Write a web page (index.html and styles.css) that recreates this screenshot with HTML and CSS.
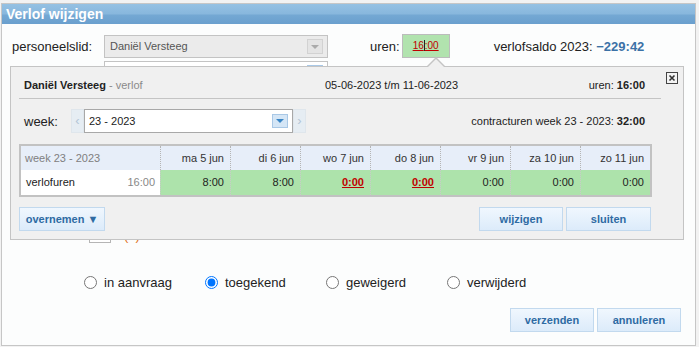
FILE: index.html
```html
<!DOCTYPE html>
<html lang="nl">
<head>
    <meta charset="utf-8">
    <title>Verlof wijzigen</title>
    <link rel="stylesheet" href="styles.css">
</head>

<body>
    <div class="dialog">
        <div class="dialog-title">Verlof wijzigen</div>
        <div class="dialog-body">

            <div class="top-row">
                <span class="field-label">personeelslid:</span>
                <div class="select select-disabled">
                    <span>Daniël Versteeg</span>
                    <span class="select-btn"><i class="tri"></i></span>
                </div>
                <span class="uren-label">uren:</span>
                <div class="uren-box"><a href="#">16<span class="caret"></span>:00</a></div>
                <span class="saldo">verlofsaldo 2023: <b>−229:42</b></span>
            </div>

            <div class="second-row">
                <div class="select">
                    <span>verlof</span>
                    <span class="select-btn blue"><i class="tri"></i></span>
                </div>
            </div>

            <div class="check-row">
                <span class="check-box"></span><span class="hint">(?)</span>
            </div>

            <div class="status-row">
                <label><input type="radio" name="status"> in aanvraag</label>
                <label><input type="radio" name="status" checked> toegekend</label>
                <label><input type="radio" name="status"> geweigerd</label>
                <label><input type="radio" name="status"> verwijderd</label>
            </div>

            <div class="dialog-actions">
                <button class="btn" type="button">verzenden</button>
                <button class="btn" type="button">annuleren</button>
            </div>

            <!-- popup over the form -->
            <span class="pointer"></span>
            <span class="pointer pointer-inner"></span>
            <div class="popup">
                <span class="close-btn">
                    <svg width="12" height="12" viewBox="0 0 12 12">
                        <rect x="0.5" y="0.5" width="11" height="11" fill="#f4f4f4" stroke="#444"/>
                        <path d="M3.5 3.5 L8.5 8.5 M8.5 3.5 L3.5 8.5" stroke="#333" stroke-width="1.6"/>
                    </svg>
                </span>

                <div class="popup-head">
                    <span class="who"><b>Daniël Versteeg</b> <span class="sub">- verlof</span></span>
                    <span class="period">05-06-2023 t/m 11-06-2023</span>
                    <span class="total">uren: <b>16:00</b></span>
                </div>

                <div class="week-row">
                    <span class="week-label">week:</span>
                    <div class="week-sel">
                        <span class="nav">&#8249;</span>
                        <div class="week-input">
                            23 - 2023
                            <span class="select-btn blue"><i class="tri"></i></span>
                        </div>
                        <span class="nav">&#8250;</span>
                    </div>
                    <span class="contract">contracturen week 23 - 2023: <b>32:00</b></span>
                </div>

                <div class="hours-grid">
                    <div class="cell head first">week 23 - 2023</div>
                    <div class="cell head">ma 5 jun</div>
                    <div class="cell head">di 6 jun</div>
                    <div class="cell head">wo 7 jun</div>
                    <div class="cell head">do 8 jun</div>
                    <div class="cell head">vr 9 jun</div>
                    <div class="cell head">za 10 jun</div>
                    <div class="cell head">zo 11 jun</div>

                    <div class="cell first row-name"><span>verlofuren</span><span class="sum">16:00</span></div>
                    <div class="cell day">8:00</div>
                    <div class="cell day">8:00</div>
                    <div class="cell day"><a class="warn" href="#">0:00</a></div>
                    <div class="cell day"><a class="warn" href="#">0:00</a></div>
                    <div class="cell day">0:00</div>
                    <div class="cell day">0:00</div>
                    <div class="cell day">0:00</div>
                </div>

                <div class="popup-actions">
                    <button class="btn btn-wide" type="button">overnemen &#9660;</button>
                    <button class="btn" type="button">wijzigen</button>
                    <button class="btn btn-85" type="button">sluiten</button>
                </div>
            </div>

        </div>
    </div>
</body>
</html>
```

FILE: styles.css
```css
body {
    margin: 0;
    background: #f2f2f2;
    font-family: "Liberation Sans", Arial, sans-serif;
    color: #222;
}

.dialog {
    margin: 3px 3px 0 1px;
    height: 343px;
    box-sizing: border-box;
    border: 1px solid #c6c6c6;
    background: #fcfdfd;
    overflow: hidden;
}

.dialog-title {
    height: 20px;
    line-height: 20px;
    padding-left: 4px;
    background: linear-gradient(#95c1e3, #88b7dd 50%, #74a8d3 55%, #6a9fce);
    color: #fff;
    font-size: 14px;
    font-weight: bold;
}

.dialog-body {
    position: relative;
    padding-top: 10px;
}

/* form rows */

.top-row {
    display: flex;
    align-items: center;
    height: 24px;
    padding-left: 10px;
    font-size: 13px;
}

.field-label {  width: 92px;  }

.select {
    position: relative;
    width: 224px;
    height: 23px;
    box-sizing: border-box;
    border: 1px solid #c3c3c3;
    background: #fff;
    padding-left: 5px;
    font-size: 11px;
    line-height: 21px;
}

.select-disabled {
    background: #ebebeb;
    color: #555;
}

.select-btn {
    position: absolute;
    right: 4px;
    top: 3px;
    width: 16px;
    height: 15px;
    box-sizing: border-box;
    border: 1px solid #d2d2d2;
    background: #e4e4e4;
}

.select-btn .tri {
    position: absolute;
    left: 3px;
    top: 5px;
    border-left: 4px solid transparent;
    border-right: 4px solid transparent;
    border-top: 4px solid #aaa;
}

.select-btn.blue {
    border-color: #a9c8e6;
    background: #d5e6f6;
}

.select-btn.blue .tri {  border-top-color: #3a86c6;  }

.uren-label {  margin-left: 42px;  }

.uren-box {
    width: 48px;
    height: 24px;
    margin-left: 2px;
    box-sizing: border-box;
    border: 1px solid #bcbcbc;
    background: #b1e3ae;
    text-align: center;
    font-size: 10px;
    line-height: 22px;
}

.uren-box a {  color: #c00000;  }

.caret {
    display: inline-block;
    width: 0;
    height: 11px;
    border-left: 1px solid #222;
    vertical-align: -2px;
}

.saldo {  margin-left: 44px;  }
.saldo b {  color: #3b71a6;  }

.second-row {
    margin-top: 3px;
    padding-left: 102px;
}

.check-row {
    display: flex;
    align-items: center;
    height: 15px;
    margin-top: 144px;
    padding-left: 87px;
}

.check-box {
    width: 22px;
    height: 15px;
    box-sizing: border-box;
    border: 1px solid #b5b5b5;
    background: #fff;
}

.hint {
    margin-left: 13px;
    color: #e07020;
    font-size: 13px;
}

.status-row {
    display: flex;
    align-items: center;
    height: 16px;
    margin-top: 31px;
    padding-left: 82px;
    font-size: 13px;
}

.status-row label {
    display: flex;
    align-items: center;
    gap: 7px;
    width: 121px;
}

.status-row input {
    margin: 0;
    width: 13px;
    height: 13px;
}

.dialog-actions {
    display: flex;
    justify-content: flex-end;
    gap: 3px;
    margin-top: 18px;
    padding-right: 14px;
}

.btn {
    width: 84px;
    height: 24px;
    padding: 0;
    border: solid 1px #c2d9ee;
    background: linear-gradient(#f0f7fe, #e6f1fc 50%, #dcebfa);
    color: #2f6ba3;
    font-family: inherit;
    font-size: 11px;
    font-weight: bold;
}

.btn-wide {
    width: 86px;
    margin-right: auto;
}

.btn-85 {  width: 85px;  }

/* popup */

.pointer {
    position: absolute;
    left: 425px;
    top: 33px;
    z-index: 3;
    width: 0;
    border-left: 9px solid transparent;
    border-right: 9px solid transparent;
    border-bottom: 9px solid #c4c4c4;
}

.pointer-inner {
    left: 426px;
    top: 35px;
    border-left-width: 8px;
    border-right-width: 8px;
    border-bottom: 8px solid #f0f0f0;
}

.popup {
    position: absolute;
    left: 8px;
    top: 42px;
    z-index: 2;
    width: 674px;
    height: 174px;
    box-sizing: border-box;
    border: 1px solid #c4c4c4;
    background: #f0f0f0;
    padding: 0 32px 0 8px;
    font-size: 11px;
}

.close-btn {
    position: absolute;
    right: 5px;
    top: 5px;
    width: 12px;
    height: 12px;
    line-height: 0;
}

.popup-head {
    display: flex;
    margin-right: -10px;
    padding: 11px 16px 6px 5px;
    line-height: 14px;
    border-bottom: 1px solid #c4c4c4;
}

.who {  width: 301px;  }
.who .sub {  color: #8a8a8a;  }
.total {  margin-left: auto;  }

.week-row {
    display: flex;
    align-items: center;
    height: 24px;
    margin-top: 10px;
    padding-left: 5px;
}

.week-label {
    width: 47px;
    font-size: 13px;
}

.week-sel {
    display: flex;
    height: 24px;
}

.nav {
    width: 13px;
    box-sizing: border-box;
    border: 1px solid #dfe6ec;
    background: #e6edf3;
    color: #b3c5d6;
    font-size: 13px;
    line-height: 21px;
    text-align: center;
}

.week-input {
    position: relative;
    width: 209px;
    box-sizing: border-box;
    border: 1px solid #a8a8a8;
    background: #fff;
    padding-left: 4px;
    line-height: 22px;
}

.week-input .select-btn {
    top: 4px;
    height: 14px;
}

.week-input .select-btn .tri {  top: 4px;  }

.contract {
    margin-left: auto;
    padding-right: 6px;
}

.hours-grid {
    display: grid;
    grid-template-columns: 139px repeat(7, 70px);
    grid-template-rows: 24px 25px;
    width: fit-content;
    margin-top: 11px;
    border: 2px solid #c2c2c2;
}

.cell {
    padding: 0 6px 0 5px;
    text-align: right;
    line-height: 24px;
    border-left: 1px dotted #b5b5b5;
}

.cell.first {  border-left: none;  }

.head {
    background: #e7eef9;
    color: #333;
}

.head.first {
    padding-left: 4px;
    text-align: left;
    color: #808080;
}

.row-name {
    display: flex;
    justify-content: space-between;
    padding: 0 5px;
    background: #fff;
    line-height: 25px;
}

.row-name .sum {  color: #888;  }

.day {
    background: #ade3ab;
    line-height: 25px;
    border-left-color: #c9c9c9;
}

.warn {
    color: #c00000;
    font-weight: bold;
}

.popup-actions {
    display: flex;
    gap: 3px;
    margin-top: 10px;
}
```
